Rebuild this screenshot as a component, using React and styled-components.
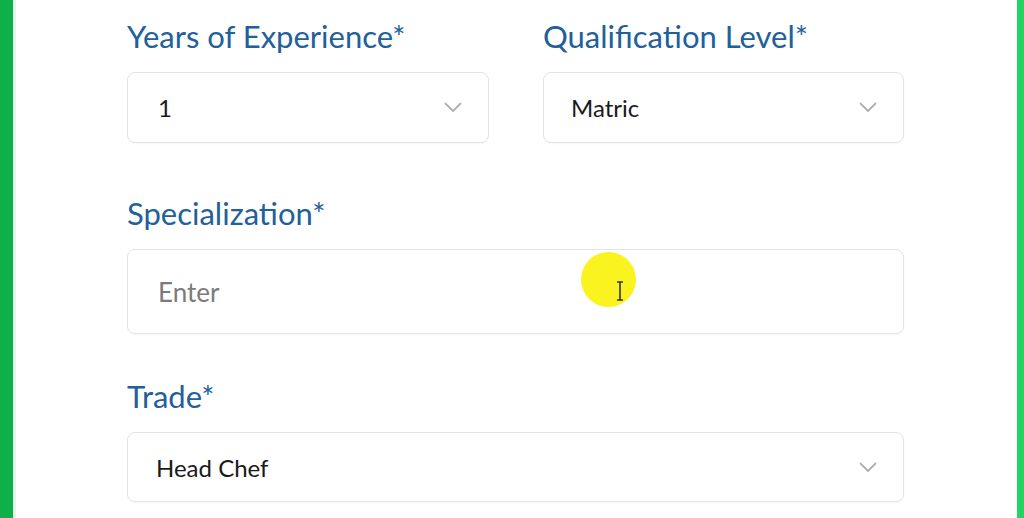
import React from 'react'
import styled, { createGlobalStyle } from 'styled-components';

const GlobalStyle = createGlobalStyle`
  html, body {
    margin: 0;
    padding: 0;
    background: #fff;
    overflow: hidden;
  }
  * { box-sizing: border-box; }
`;

const Page = styled.div`
  display: flex;
  flex-direction: row;
  width: 1024px;
  height: 518px;
  font-family: Lato, "Liberation Sans", sans-serif;
  position: relative;
`;

const SideBar = styled.div`
  width: ${(props) => props.w}px;
  background: ${(props) => props.color};
  flex-shrink: 0;
`;

const Main = styled.div`
  flex: 1;
  padding: 18px 0 0 111px;
`;

const Form = styled.div`
  width: 777px;
  display: flex;
  flex-direction: column;
`;

const Row = styled.div`
  display: grid;
  grid-template-columns: 362px 361px;
  column-gap: 54px;
  margin-bottom: ${(props) => props.mb || 0}px;
`;

const Field = styled.div`
  display: flex;
  flex-direction: column;
  margin-bottom: ${(props) => props.mb || 0}px;
`;

const Label = styled.label`
  height: 36px;
  line-height: 36px;
  font-size: 31px;
  color: #21609a;
  margin-bottom: 18px;
`;

const Box = styled.div`
  height: ${(props) => props.h}px;
  border: 1.5px solid #e4e4e4;
  border-radius: 8px;
  display: flex;
  flex-direction: row;
  align-items: center;
  justify-content: space-between;
  padding: 0 26px 0 ${(props) => props.pl || 30}px;
  font-size: ${(props) => (props.placeholder ? 26 : 24)}px;
  color: ${(props) => (props.placeholder ? "#7b7b7b" : "#1a1a1a")};
  box-shadow: 0 1px 2px rgba(0,0,0,0.04);
`;

const Chevron = () => (
  <svg width="18" height="11" viewBox="0 0 18 11" fill="none">
    <path d="M1.5 1.5 L9 9 L16.5 1.5" stroke="#b0b0b0" strokeWidth="1.8" strokeLinecap="round" strokeLinejoin="round" />
  </svg>
);

const Highlight = styled.div`
  position: absolute;
  left: 581px;
  top: 252px;
  width: 55px;
  height: 55px;
  border-radius: 50%;
  background: #fbf31f;
`;

const Cursor = styled.svg`
  position: absolute;
  left: 615px;
  top: 281px;
`;

const App = () => {
  return (
    <Page>
      <GlobalStyle />
      <SideBar w={13} color="#0db04b" />
      <SideBar w={3} color="#e9f5ec" />
      <Main>
        <Form>
          <Row mb={52}>
            <Field>
              <Label>Years of Experience*</Label>
              <Box h={71}>1<Chevron /></Box>
            </Field>
            <Field>
              <Label>Qualification Level*</Label>
              <Box h={71} pl={27}>Matric<Chevron /></Box>
            </Field>
          </Row>
          <Field mb={44}>
            <Label>Specialization*</Label>
            <Box h={85} placeholder={1}>Enter</Box>
          </Field>
          <Field>
            <Label>Trade*</Label>
            <Box h={70} pl={28}>Head Chef<Chevron /></Box>
          </Field>
        </Form>
      </Main>
      <SideBar w={7} color="#1fd760" />
      <Highlight />
      <Cursor width="10" height="20" viewBox="0 0 10 20">
        <path d="M2 1 H8 M5 1 V19 M2 19 H8" stroke="#333" strokeWidth="1.6" fill="none" />
      </Cursor>
    </Page>
  )
}

export default App;
